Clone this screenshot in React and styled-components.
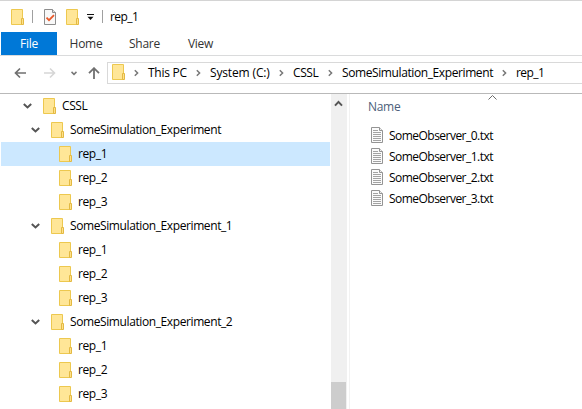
import React from 'react';
import styled, { createGlobalStyle } from 'styled-components';

const GlobalStyle = createGlobalStyle`
  * { box-sizing: border-box; }
  html, body { margin: 0; background: #fff; overflow: hidden; }
`;

const Window = styled.div`
  width: 582px;
  height: 409px;
  display: flex;
  flex-direction: column;
  overflow: hidden;
  background: #fff;
  color: #000;
  border-top: 1px solid #d4d4d4;
  font: 12px/16px "Open Sans", "Noto Sans", sans-serif;
  letter-spacing: -0.4px;
  white-space: nowrap;
  cursor: default;

  svg { display: block; flex: none; }
`;

const TitleBar = styled.header`
  height: 31px;
  flex: none;
  display: flex;
  align-items: center;
  padding-left: 11px;
`;

const Title = styled.span`
  letter-spacing: -0.55px;
`;

const Separator = styled.span`
  width: 1px;
  height: 13px;
  background: #a0a0a0;
  margin: 0 ${p => p.$after}px 0 ${p => p.$before}px;
`;

const QuickIcon = styled.span`
  margin-right: ${p => p.$gap || 0}px;
`;

const RibbonTabs = styled.nav`
  height: 24px;
  flex: none;
  display: flex;
  padding-left: 1px;
  border-bottom: 1px solid #dadbdc;
`;

const Tab = styled.div`
  width: ${p => p.$width}px;
  text-align: center;
  line-height: 24px;
  height: 23px;
  letter-spacing: -0.25px;
  color: ${p => (p.$active ? '#fff' : '#333')};
  background: ${p => (p.$active ? '#0078d7' : 'transparent')};
`;

const NavigationBar = styled.div`
  height: 38px;
  flex: none;
  display: flex;
  padding: 6px 0 0 14px;
  border-bottom: 1px solid #b9b9b9;
`;

const NavButtons = styled.div`
  height: 22px;
  width: 93px;
  display: flex;
  align-items: center;
`;

const NavSlot = styled.span`
  margin-right: ${p => p.$gap}px;
`;

const AddressBox = styled.div`
  flex: 1;
  height: 22px;
  display: flex;
  align-items: center;
  padding-left: 4px;
  border: 1px solid #d9d9d9;
  border-right: 0;

  > svg:first-child { margin: -2px 9px 0 0; }
`;

const Crumb = styled.span`
  width: ${p => p.$width}px;
  margin-left: 9px;
  letter-spacing: ${p => p.$spacing ?? -0.4}px;
`;

const Content = styled.main`
  flex: 1;
  min-height: 0;
  display: flex;
`;

const Tree = styled.div`
  width: 330px;
  padding-left: 1px;
  overflow: hidden;
`;

const TreeRow = styled.div`
  height: 24px;
  display: flex;
  align-items: center;
  padding-left: ${p => 22 + p.$level * 8}px;
  background: ${p => (p.$selected ? '#cce8ff' : 'transparent')};
`;

const ChevronSlot = styled.span`
  width: 20px;
`;

const TreeLabel = styled.span`
  margin: -1px 0 0 6px;
`;

const ScrollTrack = styled.div`
  width: 16px;
  margin-left: 1px;
  display: flex;
  flex-direction: column;
  justify-content: space-between;
  background: #f0f0f0;

  > svg { margin: 6px 0 0 3px; }
`;

const ScrollThumb = styled.div`
  width: 15px;
  height: 27px;
  background: #cdcdcd;
`;

const FilePane = styled.section`
  flex: 1;
  margin-left: 2px;
  border-left: 1px solid #f2f2f2;
`;

const ColumnHeader = styled.div`
  height: 31px;
  display: flex;
  padding-left: 18px;
  color: #4c607a;

  > svg { margin: 1px 0 0 88px; }
`;

const ColumnTitle = styled.span`
  width: 32px;
  padding-top: 5px;
  letter-spacing: -0.3px;
`;

const FileRow = styled.div`
  height: 21px;
  display: flex;
  padding: 2px 0 0 21px;
`;

const FileName = styled.span`
  margin-left: 6px;
  padding-top: 1px;
  letter-spacing: -0.53px;
`;

const Folder = () => (
  <svg width="13" height="16" viewBox="0 0 13 16">
    <path d="M.5.5h11v15H.5z" fill="#ffe697" stroke="#edc84f" />
    <path d="M10.5 9.5h2v6h-2z" fill="#ffe189" stroke="#e3b943" />
  </svg>
);

const CheckedDocument = () => (
  <svg width="12" height="16" viewBox="0 0 12 16">
    <path d="M.5.5h8l3 3v12H.5z" fill="#f8f8f8" stroke="#8d8d8d" />
    <path d="M8.5.5v3h3" fill="#ddd" stroke="#8d8d8d" />
    <path d="M2.5 8.7l2.5 2.5 5-5" fill="none" stroke="#e8592a" strokeWidth="1.8" />
  </svg>
);

const Customize = () => (
  <svg width="7" height="6" viewBox="0 0 7 6">
    <path d="M0 0h7v1H0zM.5 2.7h6L3.5 6z" fill="#111" />
  </svg>
);

const TextFile = () => (
  <svg width="12" height="16" viewBox="0 0 12 16">
    <path d="M.5.5h8l3 3v12H.5z" fill="#fbfbfb" stroke="#949494" />
    <path d="M8.5.5v3h3" fill="#eee" stroke="#949494" />
    <path d="M2 3.5h5M2 5.5h8M2 7.5h8M2 9.5h8M2 11.5h8M2 13.5h8" stroke="#a3a3a3" />
  </svg>
);

const Back = () => (
  <svg width="12" height="12" viewBox="0 0 12 12" fill="none" stroke="#707070" strokeWidth="1.7">
    <path d="M12 6H1.5M6 1.5L1.5 6 6 10.5" />
  </svg>
);

const Forward = () => (
  <svg width="12" height="12" viewBox="0 0 12 12" fill="none" stroke="#d6d6d6" strokeWidth="1.6">
    <path d="M0 6h10.5M6 1.5L10.5 6 6 10.5" />
  </svg>
);

const Up = () => (
  <svg width="12" height="12" viewBox="0 0 12 12" fill="none" stroke="#707070" strokeWidth="1.8">
    <path d="M6 12V1.5M1 6.2l5-5 5 5" />
  </svg>
);

const SmallDown = () => (
  <svg width="6" height="5" viewBox="0 0 6 5" fill="none" stroke="#777" strokeWidth="1.5">
    <path d="M.5.9L3 3.4 5.5.9" />
  </svg>
);

const CrumbArrow = () => (
  <svg width="5" height="8" viewBox="0 0 5 8" fill="none" stroke="#777" strokeWidth="1.5">
    <path d="M.8 1.2L3.6 4 .8 6.8" />
  </svg>
);

const Expanded = () => (
  <svg width="9" height="6" viewBox="0 0 9 6" fill="none" stroke="#555" strokeWidth="2">
    <path d="M.8 1l3.7 3.4L8.2 1" />
  </svg>
);

const ScrollUp = () => (
  <svg width="9" height="7" viewBox="0 0 9 7" fill="none" stroke="#555" strokeWidth="2">
    <path d="M1 5.6l3.5-3.7L8 5.6" />
  </svg>
);

const SortUp = () => (
  <svg width="9" height="5" viewBox="0 0 9 5" fill="none" stroke="#6a6a6a">
    <path d="M.5 4.5l4-4 4 4" />
  </svg>
);

const crumbs = [
  { name: 'This PC', width: 48, spacing: -0.25 },
  { name: 'System (C:)', width: 69, spacing: -0.15 },
  { name: 'CSSL', width: 35 },
  { name: 'SomeSimulation_Experiment', width: 160 },
  { name: 'rep_1', width: 28, spacing: -0.55 },
];

const replications = ['rep_1', 'rep_2', 'rep_3'].map(name => ({ name, level: 2 }));
const tree = [
  { name: 'CSSL', level: 0, open: true },
  { name: 'SomeSimulation_Experiment', level: 1, open: true },
  ...replications.map((r, i) => ({ ...r, selected: i === 0 })),
  { name: 'SomeSimulation_Experiment_1', level: 1, open: true },
  ...replications,
  { name: 'SomeSimulation_Experiment_2', level: 1, open: true },
  ...replications,
];

const files = [0, 1, 2, 3].map(n => `SomeObserver_${n}.txt`);

export default function App() {
  return (
    <>
      <GlobalStyle />
      <Window>
        <TitleBar>
          <Folder />
          <Separator $before={8} $after={11} />
          <QuickIcon $gap={10}><CheckedDocument /></QuickIcon>
          <QuickIcon $gap={8}><Folder /></QuickIcon>
          <Customize />
          <Separator $before={8} $after={7} />
          <Title>rep_1</Title>
        </TitleBar>
        <RibbonTabs>
          <Tab $active $width={56}>File</Tab>
          <Tab $width={58}>Home</Tab>
          <Tab $width={59}>Share</Tab>
          <Tab $width={53}>View</Tab>
        </RibbonTabs>
        <NavigationBar>
          <NavButtons>
            <NavSlot $gap={18}><Back /></NavSlot>
            <NavSlot $gap={15}><Forward /></NavSlot>
            <NavSlot $gap={11}><SmallDown /></NavSlot>
            <Up />
          </NavButtons>
          <AddressBox>
            <Folder />
            {crumbs.map(c => (
              <React.Fragment key={c.name}>
                <CrumbArrow />
                <Crumb $width={c.width} $spacing={c.spacing}>{c.name}</Crumb>
              </React.Fragment>
            ))}
          </AddressBox>
        </NavigationBar>
        <Content>
          <Tree>
            {tree.map((n, i) => (
              <TreeRow key={i} $level={n.level} $selected={n.selected}>
                <ChevronSlot>{n.open && <Expanded />}</ChevronSlot>
                <Folder />
                <TreeLabel>{n.name}</TreeLabel>
              </TreeRow>
            ))}
          </Tree>
          <ScrollTrack>
            <ScrollUp />
            <ScrollThumb />
          </ScrollTrack>
          <FilePane>
            <ColumnHeader>
              <ColumnTitle>Name</ColumnTitle>
              <SortUp />
            </ColumnHeader>
            {files.map(name => (
              <FileRow key={name}>
                <TextFile />
                <FileName>{name}</FileName>
              </FileRow>
            ))}
          </FilePane>
        </Content>
      </Window>
    </>
  );
}
